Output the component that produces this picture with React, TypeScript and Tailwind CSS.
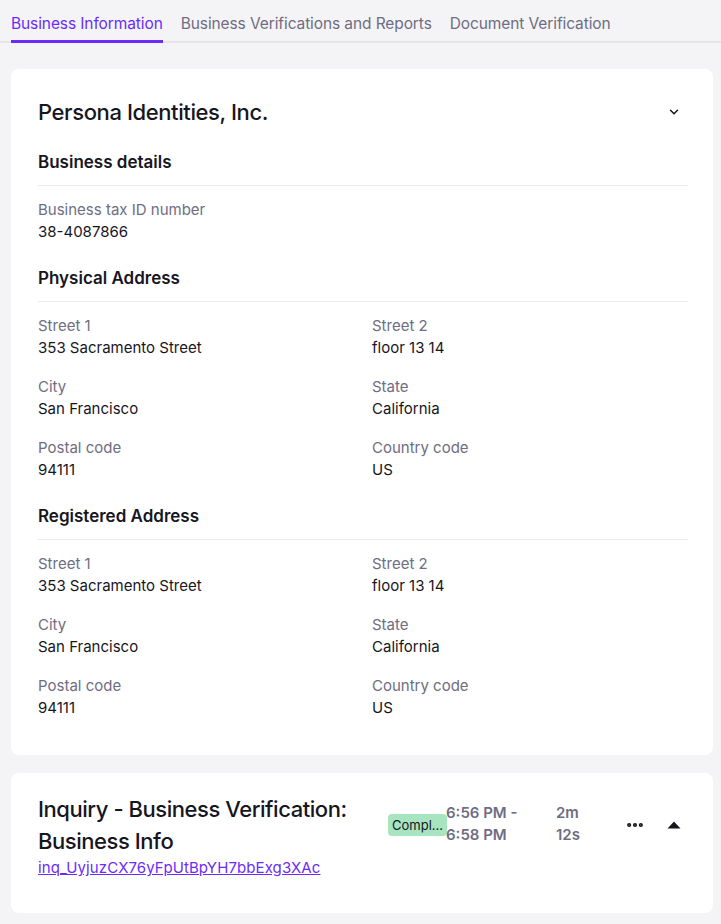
import React from 'react';
import { ChevronDown, MoreHorizontal } from 'lucide-react';

type Field = { label: string; value: string };

const tabs = ['Business Information', 'Business Verifications and Reports', 'Document Verification'];

const address: Field[] = [
  { label: 'Street 1', value: '353 Sacramento Street' },
  { label: 'Street 2', value: 'floor 13 14' },
  { label: 'City', value: 'San Francisco' },
  { label: 'State', value: 'California' },
  { label: 'Postal code', value: '94111' },
  { label: 'Country code', value: 'US' },
];

const FieldItem = ({ label, value }: Field) => (
  <div className="flex flex-col">
    <span className="text-[15px] leading-[22px] text-[#6f6d82]">{label}</span>
    <span className="text-[15px] leading-[22px] text-[#17161f]">{value}</span>
  </div>
);

const Section = ({ title, children }: { title: string; children: React.ReactNode }) => (
  <div className="mt-[23px]">
    <h3 className="text-[17px] leading-[24px] font-semibold text-[#17161f]">{title}</h3>
    <div className="mt-[11px] border-t border-[#ebebef] pt-[13px]">{children}</div>
  </div>
);

const AddressGrid = () => (
  <div className="grid grid-cols-2 gap-x-[18px] gap-y-[17px]">
    {address.map((f) => (
      <FieldItem key={f.label} {...f} />
    ))}
  </div>
);

export default function App() {
  return (
    <div
      className="min-h-screen w-[721px] bg-[#f4f4f6] pb-[11px]"
      style={{ fontFamily: 'Inter, "Noto Sans", sans-serif' }}
    >
      {/* tab strip */}
      <div className="flex gap-[18px] border-b-2 border-[#e4e4e9] pl-[11px] pt-[12px]">
        {tabs.map((t, i) => (
          <div
            key={t}
            className={`-mb-[2px] pb-[5px] text-[15.5px] leading-[23px] tracking-[-0.1px] ${
              i === 0 ? 'border-b-[3px] border-[#6a2cfc] text-[#6a2cfc]' : 'border-b-[3px] border-transparent text-[#6f6d82]'
            }`}
          >
            {t}
          </div>
        ))}
      </div>

      {/* business information card */}
      <div className="ml-[11px] mr-[8px] mt-[26px] rounded-[8px] bg-white pb-[36px] pl-[27px] pr-[25px] pt-[28px]">
        <div className="flex items-center justify-between">
          <h2 className="text-[22px] leading-[30px] font-medium tracking-[-0.4px] text-[#17161f]">
            Persona Identities, Inc.
          </h2>
          <ChevronDown size={14} strokeWidth={2.5} className="mr-[7px] text-[#17161f]" />
        </div>

        <Section title="Business details">
          <FieldItem label="Business tax ID number" value="38-4087866" />
        </Section>

        <Section title="Physical Address">
          <AddressGrid />
        </Section>

        <Section title="Registered Address">
          <AddressGrid />
        </Section>
      </div>

      {/* inquiry row */}
      <div className="ml-[11px] mr-[8px] mt-[18px] flex items-start rounded-[8px] bg-white pb-[34px] pl-[27px] pr-[25px] pt-[20px]">
        <div className="w-[350px] shrink-0">
          <h2 className="text-[22px] leading-[32px] font-medium tracking-[-0.45px] text-[#17161f]">
            Inquiry - Business Verification: Business Info
          </h2>
          <a href="#" className="block text-[15px] leading-[22px] tracking-[0.1px] text-[#6a2cfc] underline">
            inq_UyjuzCX76yFpUtBpYH7bbExg3XAc
          </a>
        </div>
        <div className="mt-[21px] flex w-[58px] shrink-0 justify-start">
          <span className="rounded-[4px] bg-[#a6e5c0] px-[4px] text-[13px] leading-[22px] text-[#17161f]">
            Compl…
          </span>
        </div>
        <div className="mt-[9px] w-[110px] shrink-0 text-[15px] leading-[22px] font-semibold text-[#6f6d82]">
          <div>6:56 PM -</div>
          <div>6:58 PM</div>
        </div>
        <div className="mt-[9px] w-[60px] shrink-0 text-[15px] leading-[22px] font-semibold text-[#6f6d82]">
          <div>2m</div>
          <div>12s</div>
        </div>
        <div className="mt-[22px] flex items-center gap-[22px] pl-[9px]">
          <MoreHorizontal size={20} strokeWidth={3} className="text-[#17161f]" />
          <svg width="14" height="8" viewBox="0 0 14 8" className="text-[#17161f]">
            <path d="M7 0.5 L13.5 7.5 L0.5 7.5 Z" fill="currentColor" />
          </svg>
        </div>
      </div>
    </div>
  );
}
